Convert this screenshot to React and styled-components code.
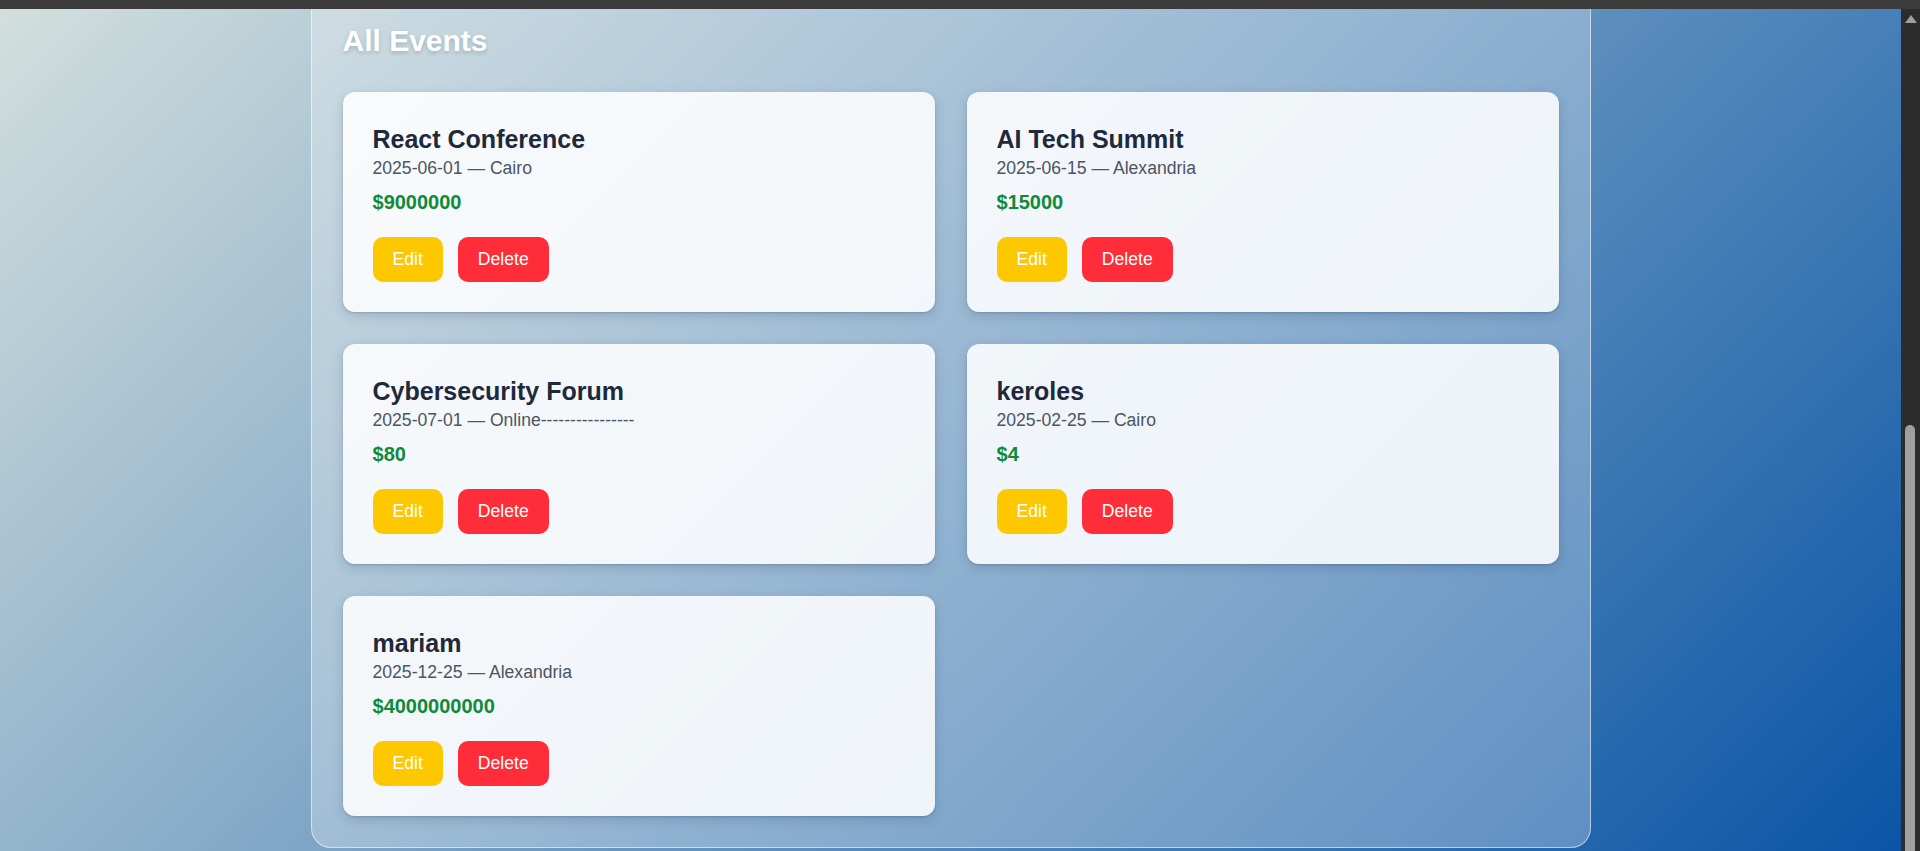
import React from "react";
import styled, { createGlobalStyle } from "styled-components";

const events = [
    { id: 1, title: "React Conference", date: "2025-06-01", location: "Cairo", price: 9000000 },
    { id: 2, title: "AI Tech Summit", date: "2025-06-15", location: "Alexandria", price: 15000 },
    { id: 3, title: "Cybersecurity Forum", date: "2025-07-01", location: "Online----------------", price: 80 },
    { id: 4, title: "keroles", date: "2025-02-25", location: "Cairo", price: 4 },
    { id: 5, title: "mariam", date: "2025-12-25", location: "Alexandria", price: 4000000000 },
];

function EventCard({ title, date, location, price }) {
    return (
        <Card>
            <CardTitle>{title}</CardTitle>
            <CardMeta>
                {date} — {location}
            </CardMeta>
            <CardPrice>${price}</CardPrice>
            <Actions>
                <ActionButton $variant="edit">Edit</ActionButton>
                <ActionButton $variant="delete">Delete</ActionButton>
            </Actions>
        </Card>
    );
}

function App() {
    return (
        <>
            <GlobalStyle />
            <Screen>
                <TopStrip />
                <Body>
                    <Page>
                        <EventsPanel>
                            <PanelHeading>All Events</PanelHeading>
                            <EventsGrid>
                                {events.map(({ id, ...event }) => (
                                    <EventCard key={id} {...event} />
                                ))}
                            </EventsGrid>
                        </EventsPanel>
                    </Page>

                    {/* drawn scrollbar, page is shown scrolled to the bottom */}
                    <Scrollbar>
                        <ScrollArrow />
                        <ScrollThumb />
                    </Scrollbar>
                </Body>
            </Screen>
        </>
    );
}

export default App;

const GlobalStyle = createGlobalStyle`
    html, body {
        margin: 0;
        height: 100%;
        overflow: hidden;
    }

    body {
        font-family: "Liberation Sans", Arial, sans-serif;
        background: #2c2c2c;
    }

    * {
        box-sizing: border-box;
    }
`;

const Screen = styled.div`
    height: 100vh;
    display: flex;
    flex-direction: column;
`;

const TopStrip = styled.div`
    height: 9px;
    flex-shrink: 0;
    background-color: #3b3b3b;
`;

const Body = styled.div`
    flex: 1;
    display: flex;
    min-height: 0;
`;

const Page = styled.main`
    flex: 1;
    display: flex;
    flex-direction: column;
    justify-content: flex-end;
    align-items: center;
    overflow: hidden;
    padding-bottom: 3px;
    background: linear-gradient(135deg, #d2dfdd 0%, #0a55a6 100%);
`;

const EventsPanel = styled.section`
    flex-shrink: 0;
    width: 1280px;
    padding: 31px;
    border: 1px solid rgba(255, 255, 255, 0.55);
    border-radius: 20px;
    background-color: rgba(255, 255, 255, 0.28);
`;

const PanelHeading = styled.h2`
    margin: 0 0 34px;
    font-size: 30px;
    line-height: 1.15;
    font-weight: 700;
    color: #fff;
    text-shadow: 0 2px 4px rgba(0, 0, 0, 0.18);
`;

const EventsGrid = styled.div`
    display: grid;
    grid-template-columns: repeat(2, 1fr);
    gap: 32px;
`;

const Card = styled.article`
    padding: 33px 30px 30px;
    border-radius: 12px;
    background-color: rgba(255, 255, 255, 0.87);
    box-shadow: 0 4px 12px rgba(20, 40, 70, 0.16), 0 1px 2px rgba(20, 40, 70, 0.18);
`;

const CardTitle = styled.h3`
    margin: 0 0 4px;
    font-size: 25px;
    line-height: 1.15;
    font-weight: 700;
    color: #1e293b;
`;

const CardMeta = styled.p`
    margin: 0 0 13px;
    font-size: 17.6px;
    line-height: 1.15;
    color: #4b5563;
`;

const CardPrice = styled.p`
    margin: 0 0 23px;
    font-size: 20px;
    line-height: 1.15;
    font-weight: 700;
    color: #0f8a3a;
`;

const Actions = styled.div`
    display: flex;
    gap: 15px;
`;

const ActionButton = styled.button`
    padding: 12px 20px;
    border: none;
    border-radius: 10px;
    font-family: inherit;
    font-size: 17.6px;
    line-height: 21px;
    color: #fff;
    background-color: ${({ $variant }) => ($variant === "edit" ? "#fdc800" : "#ff2c3a")};
    cursor: pointer;
`;

const Scrollbar = styled.div`
    width: 19px;
    flex-shrink: 0;
    display: flex;
    flex-direction: column;
    justify-content: space-between;
    align-items: flex-start;
    padding-left: 4px;
    background-color: #2c2c2c;
`;

const ScrollArrow = styled.div`
    margin-top: 6px;
    width: 0;
    height: 0;
    border-left: 6px solid transparent;
    border-right: 6px solid transparent;
    border-bottom: 8px solid #9f9f9f;
`;

const ScrollThumb = styled.div`
    width: 10px;
    height: 426px;
    border-radius: 5px 5px 0 0;
    background-color: #9f9f9f;
`;
